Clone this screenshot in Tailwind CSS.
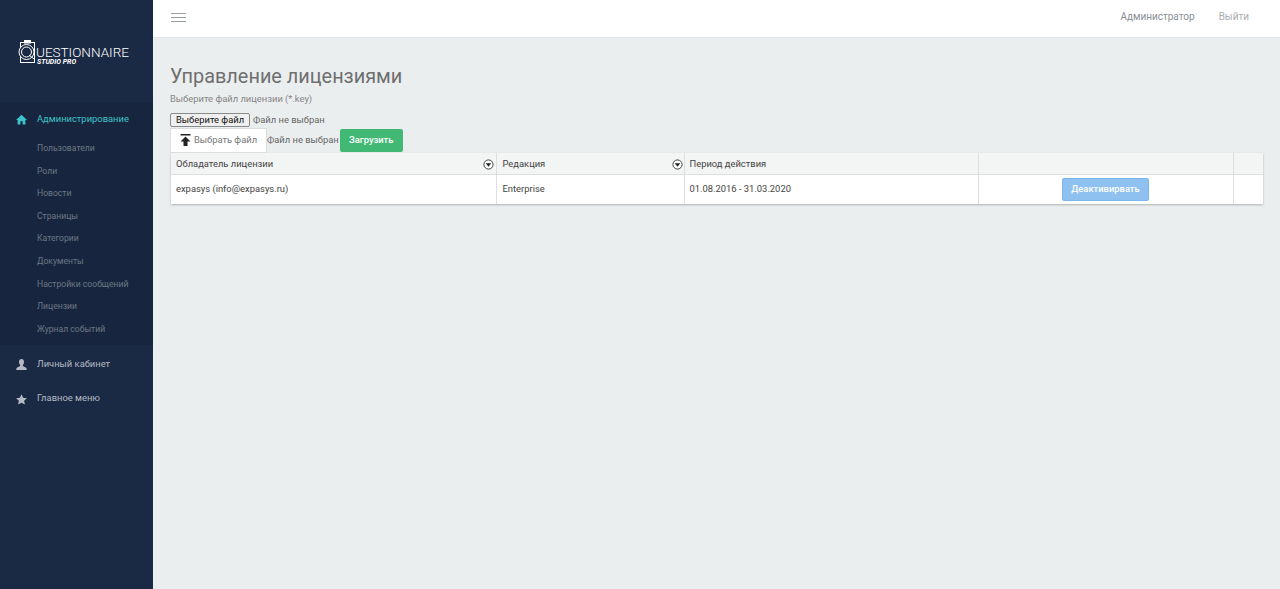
<!DOCTYPE html>
<html lang="ru">
<head>
    <meta charset="UTF-8">
    <meta name="viewport" content="width=device-width, initial-scale=1.0">
    <title>Управление лицензиями</title>
    <script src="https://cdn.jsdelivr.net/npm/@tailwindcss/browser@4"></script>
</head>
<body class="bg-[#ebeeef] font-['Roboto',sans-serif] overflow-hidden">
    <div class="flex h-[589px]">
        <!-- Sidebar -->
        <aside class="w-[153px] shrink-0 bg-[#1a2a44] flex flex-col">
            <div class="h-[102px] pl-[18px] pt-[39px]">
                <div class="flex items-start">
                    <svg width="19" height="25" viewBox="0 0 19 25" fill="none" stroke="#ffffff" stroke-width="1" class="shrink-0">
                        <rect x="2.500" y="3.500" width="14" height="20" />
                        <rect x="6" y="1" width="7" height="3.500" fill="#ffffff" stroke="none" />
                        <circle cx="8.500" cy="13" r="7.500" fill="#1a2a44" />
                        <circle cx="8.500" cy="13" r="5" />
                        <path d="M11 16l5 4" />
                    </svg>
                    <div class="-ml-[1px] mt-[6px]">
                        <div class="text-[13.500px] leading-[14px] font-light text-white">UESTIONNAIRE</div>
                        <div class="text-[7px] leading-[6px] font-bold italic text-white ml-[1px]">STUDIO PRO</div>
                    </div>
                </div>
            </div>
            <nav class="bg-[#17263e] h-[243px] pt-[5px]">
                <div class="flex items-center h-[25px] pl-[16px] text-[#3cc3c9] text-[9.400px]">
                    <svg width="11" height="11" viewBox="0 0 11 11" fill="#3cc3c9" class="shrink-0">
                        <path d="M5.500 .8L0 6h1.600v4.600h2.800V7.300h2.200v3.300h2.800V6H11z" />
                    </svg>
                    <span class="ml-[10px]">Администрирование</span>
                </div>
                <ul class="text-[8.600px] text-[#6d7686] pl-[37px] mt-[5px]">
                    <li class="h-[22.600px] leading-[22.600px]">Пользователи</li>
                    <li class="h-[22.600px] leading-[22.600px]">Роли</li>
                    <li class="h-[22.600px] leading-[22.600px]">Новости</li>
                    <li class="h-[22.600px] leading-[22.600px]">Страницы</li>
                    <li class="h-[22.600px] leading-[22.600px]">Категории</li>
                    <li class="h-[22.600px] leading-[22.600px]">Документы</li>
                    <li class="h-[22.600px] leading-[22.600px]">Настройки сообщений</li>
                    <li class="h-[22.600px] leading-[22.600px]">Лицензии</li>
                    <li class="h-[22.600px] leading-[22.600px]">Журнал событий</li>
                </ul>
            </nav>
            <div class="flex items-center h-[34px] pl-[16px] mt-[2px] text-[#b4bac4] text-[9.400px]">
                <svg width="11" height="11" viewBox="0 0 11 11" fill="#b4bac4" class="shrink-0">
                    <path d="M5.500 0C3.900 0 3 1.200 3 2.900c0 1.200.5 2.300 1.200 3 .1.6 0 1-.5 1.300C2.500 7.900.8 8.300.4 9.400L.3 11h10.400l-.1-1.600c-.4-1.100-2.100-1.500-3.300-2.200-.5-.3-.6-.7-.5-1.300.7-.7 1.200-1.800 1.200-3C8 1.200 7.100 0 5.500 0z" />
                </svg>
                <span class="ml-[10px]">Личный кабинет</span>
            </div>
            <div class="flex items-center h-[34px] pl-[16px] mt-[1px] text-[#b4bac4] text-[9.400px]">
                <svg width="11" height="11" viewBox="0 0 11 11" fill="#b4bac4" class="shrink-0 mt-[1px]">
                    <path d="M5.500 .3l1.600 3.500 3.800.4-2.800 2.600.8 3.800-3.400-1.900-3.400 1.900.8-3.800L.1 4.200l3.800-.4z" />
                </svg>
                <span class="ml-[10px] -mt-[2px]">Главное меню</span>
            </div>
        </aside>

        <div class="flex-1 min-w-0 flex flex-col">
            <!-- Top bar -->
            <header class="h-[38px] shrink-0 bg-white border-b border-[#e3e6e8] flex items-center justify-between pl-[18px] pr-[31px]">
                <div class="flex flex-col gap-[3px] w-[15px] -mt-[2px]">
                    <span class="block h-px bg-[#9a9fa6]"></span>
                    <span class="block h-px bg-[#9a9fa6]"></span>
                    <span class="block h-px bg-[#9a9fa6]"></span>
                </div>
                <div class="flex gap-[24px] text-[10px] -mt-[5px]">
                    <span class="text-[#8a8f96]">Администратор</span>
                    <span class="text-[#a9adb2]">Выйти</span>
                </div>
            </header>

            <!-- Content -->
            <main class="pl-[17px] pr-[17px] pt-[27px]">
                <h1 class="text-[19.900px] leading-[24px] text-[#6f6f6f]">Управление лицензиями</h1>
                <p class="text-[9.400px] leading-[12px] text-[#858585] mt-[4px]">Выберите файл лицензии (*.key)</p>
                <div class="flex items-center mt-[8px] h-[14px] text-[9.400px]">
                    <button class="h-[14px] w-[80px] bg-[#efefef] border border-[#8a8a8a] rounded-[2px] text-[#111] leading-none">Выберите файл</button>
                    <span class="ml-[3px] text-[#666]">Файл не выбран</span>
                </div>
                <div class="flex items-center h-[26px] text-[9.400px]">
                    <button class="h-[25px] w-[97px] bg-white border border-[#dddddd] flex items-center justify-center gap-[3px] text-[#777]">
                        <svg width="11" height="12" viewBox="0 0 11 12" fill="#222">
                            <path d="M.5 0h10v1.500H.5zM5.500 2.500L10.500 7.500H7.500V12h-4V7.500H.5z" />
                        </svg>
                        <span>Выбрать файл</span>
                    </button>
                    <span class="text-[#666]">Файл не выбран</span>
                    <button class="ml-[1px] h-[23px] w-[63px] bg-[#41b975] rounded-[2px] text-white font-medium">Загрузить</button>
                </div>

                <!-- Licence table -->
                <table class="ml-[1px] w-[1092px] table-fixed bg-white text-[9.400px] text-[#444] border-collapse shadow-[0_1px_2px_rgba(0,0,0,0.25)]">
                    <colgroup>
                        <col class="w-[325px]">
                        <col class="w-[188px]">
                        <col class="w-[294px]">
                        <col class="w-[255px]">
                        <col class="w-[30px]">
                    </colgroup>
                    <thead>
                        <tr class="h-[21px] bg-[#f3f4f4] border-b border-[#dedede] text-left">
                            <th class="font-normal pl-[5px] pr-[2px] pt-[1px] border-r border-[#dedede]">
                                <div class="flex items-center justify-between">
                                    <span>Обладатель лицензии</span>
                                    <svg width="11" height="11" viewBox="0 0 12 12" class="mt-[1px]"><circle cx="6" cy="6" r="5" fill="#fff" stroke="#333" /><path d="M3 4.500h6L6 8.500z" fill="#222" /></svg>
                                </div>
                            </th>
                            <th class="font-normal pl-[6px] pr-[1px] pt-[1px] border-r border-[#dedede]">
                                <div class="flex items-center justify-between">
                                    <span>Редакция</span>
                                    <svg width="11" height="11" viewBox="0 0 12 12" class="mt-[1px]"><circle cx="6" cy="6" r="5" fill="#fff" stroke="#333" /><path d="M3 4.500h6L6 8.500z" fill="#222" /></svg>
                                </div>
                            </th>
                            <th class="font-normal pl-[5px] pr-[6px] pt-[1px] border-r border-[#dedede]">Период действия</th>
                            <th class="border-r border-[#dedede]"></th>
                            <th></th>
                        </tr>
                    </thead>
                    <tbody>
                        <tr class="h-[30px]">
                            <td class="px-[5px] border-r border-[#dedede]">expasys (info@expasys.ru)</td>
                            <td class="px-[6px] border-r border-[#dedede]">Enterprise</td>
                            <td class="pl-[5px] pr-[6px] border-r border-[#dedede]">01.08.2016 - 31.03.2020</td>
                            <td class="border-r border-[#dedede] text-center">
                                <button class="h-[23px] w-[87px] bg-[#8ec1ef] border border-[#7ab6ec] rounded-[2px] text-white font-medium">Деактивирвать</button>
                            </td>
                            <td></td>
                        </tr>
                    </tbody>
                </table>
            </main>
        </div>
    </div>
</body>
</html>
